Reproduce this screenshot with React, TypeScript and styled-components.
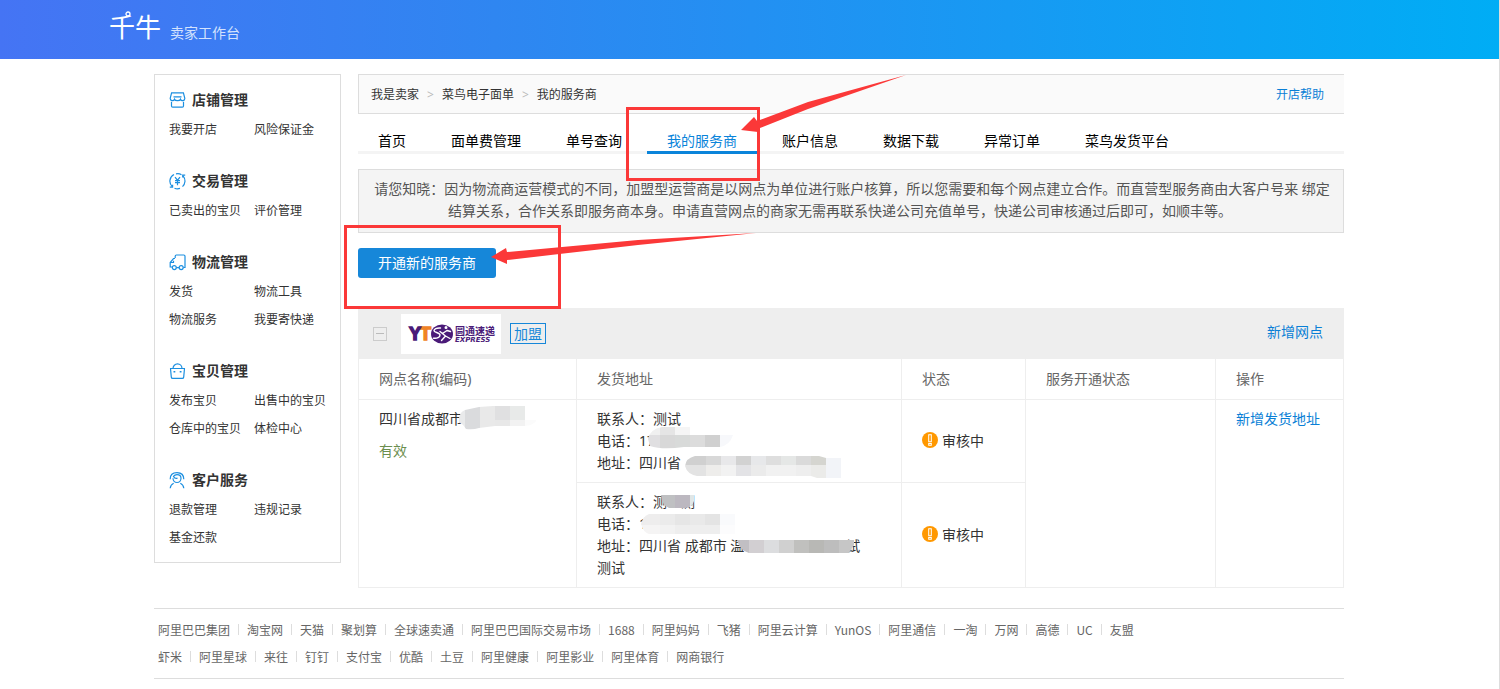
import React, { useId } from "react";
import styled, { createGlobalStyle } from "styled-components";

const BLUE = "#1687d9";
const RED = "#fb3838";

const GlobalStyle = createGlobalStyle`
  *, *::before, *::after { box-sizing: border-box; }
  body {
    margin: 0;
    background: #fff;
    color: #333;
    font-family: "Noto Sans", "Noto Sans CJK SC", sans-serif;
    font-size: 14px;
    line-height: 22px;
  }
  a { color: inherit; text-decoration: none; }
  ul, ol, p, h1, h2 { margin: 0; padding: 0; list-style: none; }
`;

const Page = styled.div`
  min-height: 100vh;
  border-right: 1px solid #ddd;
`;

/* ---------- header ---------- */

const Header = styled.header`
  display: flex;
  align-items: center;
  height: 59px;
  padding: 0 109px;
  background: linear-gradient(90deg, #4574f4, #2f86f1 33%, #00adf5);
  color: #fff;
`;

const Brand = styled.a`
  display: flex;
  align-items: center;
  gap: 9px;
`;

const BrandName = styled.span`
  position: relative;
  padding-bottom: 6px;
  font-size: 26px;
  line-height: 32px;
`;

const BrandRing = styled.svg`
  position: absolute;
  top: 0;
  left: 16px;
`;

const BrandSub = styled.span`
  padding-top: 6px;
  color: #d3e2fd;
`;

/* ---------- frame ---------- */

const Frame = styled.div`
  max-width: 1191px;
  margin: 0 auto;
  padding: 15px 1px 10px 0;
`;

const Columns = styled.div`
  display: flex;
  align-items: flex-start;
  gap: 17px;
`;

/* ---------- sidebar ---------- */

const Sidebar = styled.nav`
  flex: 0 0 187px;
  padding: 10px 0 10px 14px;
  border: 1px solid #ddd;
  font-size: 12px;
`;

const Group = styled.section`
  & + & { margin-top: 22px; }
`;

const GroupTitle = styled.h2`
  display: flex;
  align-items: center;
  gap: 6px;
  height: 30px;
  font-size: 14px;
  font-weight: 700;
  svg { flex: none; }
`;

const GroupLinks = styled.ul`
  display: grid;
  grid-template-columns: 85px 1fr;
  padding-top: 1px;
  line-height: 28px;
  white-space: nowrap;
`;

const StrokeIcon = styled.svg.attrs({ width: 17, height: 17, viewBox: "0 0 17 17", "aria-hidden": true })`
  fill: none;
  stroke: #1c8fe0;
  stroke-width: 1.2;
`;

const ShopIcon = () => (
  <StrokeIcon>
    <path d="M2.600 .8h11.800l1.400 5.600c0 2.600-3.600 3-4.300 .8-.8 2-5.200 2-6 0C4.800 9.400 1.200 9 1.200 6.400z" />
    <path d="M2.500 9.800V14c0 .8.4 1.200 1.200 1.200h9.600c.8 0 1.200-.4 1.200-1.200V9.800M4.500 4.800h8" />
  </StrokeIcon>
);
const YuanIcon = () => (
  <StrokeIcon>
    <path d="M5 1.500A7.500 7.500 0 0 0 3.200 13.600M.8 14.200h2.800V11.800M7 .9A7.500 7.500 0 0 1 12.500 1.700M13.500 13.600A7.500 7.500 0 0 0 14.200 3.200M16.200 2.200h-2.500v2.400M5.500 15.200A7.500 7.500 0 0 0 11 15.400" />
    <path d="M6 4.200l2.500 3 2.500-3M8.500 7.200v5M6 7.700h5M6 9.700h5" />
  </StrokeIcon>
);
const TruckIcon = () => (
  <StrokeIcon>
    <path d="M6.200 4V2.200c0-.8.400-1.200 1.200-1.200h7.400c.8 0 1.200.4 1.200 1.200v11.300h-1.600M6 4.500H4.500L1.200 8.500v4.500h1.800M1.500 8.500h3V6.700M7.500 13.600h2.500" />
    <circle cx="5.300" cy="13.600" r="2" />
    <circle cx="12.200" cy="13.600" r="2" />
  </StrokeIcon>
);
const BasketIcon = () => (
  <StrokeIcon>
    <path d="M1 5.500h15M1.500 5.500l.8 8.600c.1.900.5 1.300 1.400 1.300h9.600c.9 0 1.300-.4 1.400-1.300l.8-8.600M4 5.500C4 3 6 .9 8.500 .9S13 3 13 5.500" />
    <path d="M4.500 8.700h1.800M10.700 8.700h1.800" strokeWidth="1.600" />
  </StrokeIcon>
);
const ServiceIcon = () => (
  <StrokeIcon>
    <path d="M1.200 7.200C1.200 3 4 .7 8 .7s6.800 2.300 6.800 6.500M4 6.300c0 2.300 1.700 4.200 4 4.200s4-1.900 4-4.200S10.300 2.600 8 2.600C6.500 2.600 5.200 3.300 4.500 4.400c1 2 2.500 2.200 4 1.800M1.200 16.200c.2-2.500 1.200-4 3.500-5M14.800 16.200c-.2-2.500-1.200-4-3.500-5" />
  </StrokeIcon>
);

const groups = [
  { title: "店铺管理", Icon: ShopIcon, links: ["我要开店", "风险保证金"] },
  { title: "交易管理", Icon: YuanIcon, links: ["已卖出的宝贝", "评价管理"] },
  { title: "物流管理", Icon: TruckIcon, links: ["发货", "物流工具", "物流服务", "我要寄快递"] },
  { title: "宝贝管理", Icon: BasketIcon, links: ["发布宝贝", "出售中的宝贝", "仓库中的宝贝", "体检中心"] },
  { title: "客户服务", Icon: ServiceIcon, links: ["退款管理", "违规记录", "基金还款"] },
];

/* ---------- main column ---------- */

const Main = styled.main`
  position: relative;
  flex: 1;
  min-width: 0;
`;

const CrumbBar = styled.div`
  display: flex;
  align-items: center;
  justify-content: space-between;
  height: 40px;
  padding: 2px 20px 0 12px;
  border: 1px solid #ddd;
  border-right: 0;
  background: #fafafa;
  font-size: 12px;
`;

const Crumbs = styled.ol`
  display: flex;
  li + li::before {
    content: ">";
    margin: 0 8px;
    color: #bbb;
  }
`;

const BlueLink = styled.a`
  color: #0a7fd6;
`;

const Tabs = styled.nav`
  display: flex;
  gap: 5px;
  box-shadow: inset 0 -3px #f4f4f4;
`;

const Tab = styled.a<{ $active?: boolean }>`
  padding: 16px 20px 0;
  border-bottom: 3px solid ${(p) => (p.$active ? "#0a84da" : "transparent")};
  color: ${(p) => (p.$active ? "#0a84da" : "#000")};
  line-height: 21px;
`;

const Notice = styled.div`
  margin-top: 15px;
  padding: 8px 10px 10px 12px;
  border: 1px solid #ddd;
  background: #f4f4f4;
  color: #555;
  text-align: center;
`;

const NoticeTail = styled.p`
  padding-right: 24px;
`;

const PrimaryButton = styled.button`
  display: block;
  height: 30px;
  margin: 15px 0 30px;
  padding: 0 20px;
  border: 0;
  border-radius: 3px;
  background: ${BLUE};
  color: #fff;
  font: inherit;
`;

const CarrierBar = styled.div`
  display: flex;
  align-items: center;
  height: 51px;
  padding: 0 21px 0 15px;
  background: #eee;
  > a { padding-bottom: 4px; }
`;

const Collapse = styled.button`
  display: flex;
  align-items: center;
  justify-content: center;
  width: 14px;
  height: 14px;
  margin-right: 14px;
  padding: 0;
  border: 1px solid #ccc;
  background: transparent;
  &::before {
    content: "";
    width: 8px;
    height: 1px;
    background: #bbb;
  }
`;

const LogoBox = styled.svg`
  flex: none;
  background: #fff;
`;

const TypeTag = styled.span`
  margin: 0 auto 0 9px;
  padding: 0 3px;
  border: 1px solid ${BLUE};
  color: ${BLUE};
  line-height: 19px;
`;

const CarrierLogo = () => (
  <LogoBox width="100" height="40" viewBox="0 0 100 40" role="img" aria-label="圆通速递">
    <g fontFamily="Liberation Sans, sans-serif" fontWeight="700" fontSize="18" strokeWidth="1.500">
      <text x="19" y="26" fill="#f08327" stroke="#f08327">T</text>
      <text x="8" y="26" fill="#4a1a78" stroke="#4a1a78">Y</text>
    </g>
    <ellipse cx="41" cy="20" rx="11" ry="9.500" fill="#4a1a78" />
    <g fill="none" stroke="#fff" strokeWidth="1.400" strokeLinecap="round">
      <path d="M39.500 14c-4-.3-6.500 .8-6.500 2.700s6 1.800 6 4.300-3 3.700-6.500 3.200" />
      <path d="M46 16.500l-4.500 3 3 2.500-4 4.500M41.500 19.500l-2.500-2M44.500 22l4.500 2.500M46 16.500l3.500 1" />
      <circle cx="45" cy="13.500" r=".8" />
    </g>
    <text x="54" y="21" fill="#4a1a78" fontSize="10" fontWeight="700" fontFamily="Noto Sans CJK SC, sans-serif">圆通速递</text>
    <text x="54" y="28" fill="#4a1a78" fontSize="7" fontWeight="700" fontStyle="italic" fontFamily="DejaVu Sans, sans-serif">EXPRESS</text>
  </LogoBox>
);

/* ---------- table ---------- */

const Table = styled.table`
  width: 100%;
  table-layout: fixed;
  border-collapse: separate;
  border-spacing: 0;
  border-left: 1px solid #eee;
  text-align: left;
`;

const Th = styled.th<{ $share: number }>`
  width: ${(p) => p.$share}px;
  height: 41px;
  padding: 0 20px;
  border: solid #eee;
  border-width: 0 1px 1px 0;
  color: #666;
  font-weight: 400;
`;

const Td = styled.td<{ $middle?: boolean }>`
  padding: 8px 20px;
  border: solid #eee;
  border-width: 0 1px 1px 0;
  vertical-align: ${(p) => (p.$middle ? "middle" : "top")};
`;

const Line = styled.div`
  display: flex;
  height: 22px;
  white-space: pre;
`;

const Valid = styled.p`
  margin-top: 10px;
  color: #6b8e4e;
`;

const Status = styled.span`
  display: flex;
  align-items: center;
  gap: 4px;
  svg { margin-bottom: 2px; }
`;

const MosaicSvg = styled.svg<{ $before: number; $after: number }>`
  position: relative;
  flex: none;
  overflow: visible;
  margin-left: -${(p) => p.$before}px;
  margin-right: -${(p) => p.$after}px;
`;

type Band = { y: number; h: number; stops: [number, number, string][] };

/* Pixelated patch that hides private data; before/after = overlap with the neighbouring text. */
const Mosaic = ({ width, before = 0, after = 0, outline, bands }: {
  width: number; before?: number; after?: number; outline: string; bands: Band[];
}) => {
  const id = useId();
  return (
    <MosaicSvg width={width} height="22" $before={before} $after={after} shapeRendering="crispEdges" aria-hidden="true">
      <clipPath id={id}><path d={outline} /></clipPath>
      <g clipPath={`url(#${id})`}>
        {bands.map((b) => b.stops.map(([x, w, c]) => (
          <rect key={`${b.y}-${x}`} x={x} y={b.y} width={w} height={b.h} fill={c} />
        )))}
      </g>
    </MosaicSvg>
  );
};

const WarnIcon = () => (
  <svg width="16" height="16" viewBox="0 0 16 16" aria-hidden="true">
    <circle cx="8" cy="8" r="8" fill="#ff9800" />
    <path d="M6.200 2.200h3.600v8H6.200zM6.200 11h3.600v2.800H6.200z" fill="#fff" />
    <path d="M7.200 3.200h1.600v6H7.200zM7.200 12h1.600v.8H7.200z" fill="#ff9800" />
  </svg>
);

const Pending = () => <Status><WarnIcon />审核中</Status>;

/* ---------- annotations ---------- */

const Annotations = styled.svg`
  position: absolute;
  top: 0;
  left: 0;
  overflow: visible;
  pointer-events: none;
  fill: ${RED};
  fill-rule: evenodd;
`;

/* ---------- footer ---------- */

const Footer = styled.footer`
  margin-top: 20px;
  padding: 7px 4px 8px;
  border: solid #ddd;
  border-width: 1px 0;
  color: #666;
  font-family: "Noto Sans CJK SC", sans-serif;
  font-size: 12px;
  line-height: 27px;
`;

const FooterRow = styled.ul`
  display: flex;
  flex-wrap: wrap;
  li { display: flex; align-items: center; }
  li + li::before {
    content: "";
    width: 1px;
    height: 11px;
    margin: 0 8px;
    background: #ddd;
  }
`;

const footerRows = [
  ["阿里巴巴集团", "淘宝网", "天猫", "聚划算", "全球速卖通", "阿里巴巴国际交易市场", "1688", "阿里妈妈", "飞猪", "阿里云计算", "YunOS", "阿里通信", "一淘", "万网", "高德", "UC", "友盟"],
  ["虾米", "阿里星球", "来往", "钉钉", "支付宝", "优酷", "土豆", "阿里健康", "阿里影业", "阿里体育", "网商银行"],
];

const tabs = ["首页", "面单费管理", "单号查询", "我的服务商", "账户信息", "数据下载", "异常订单", "菜鸟发货平台"];

export default function App() {
  return (
    <Page>
      <GlobalStyle />
      <Header>
        <Brand href="#">
          <BrandName>
            千牛
            <BrandRing width="6" height="6" viewBox="0 0 6 6" aria-hidden="true">
              <circle cx="3" cy="3" r="2" fill="none" stroke="#fff" strokeWidth="1.300" />
            </BrandRing>
          </BrandName>
          <BrandSub>卖家工作台</BrandSub>
        </Brand>
      </Header>
      <Frame>
        <Columns>
          <Sidebar>
            {groups.map(({ title, Icon, links }) => (
              <Group key={title}>
                <GroupTitle><Icon />{title}</GroupTitle>
                <GroupLinks>
                  {links.map((l) => <li key={l}><a href="#">{l}</a></li>)}
                </GroupLinks>
              </Group>
            ))}
          </Sidebar>
          <Main>
            <CrumbBar>
              <Crumbs>
                <li><a href="#">我是卖家</a></li>
                <li><a href="#">菜鸟电子面单</a></li>
                <li><a href="#">我的服务商</a></li>
              </Crumbs>
              <BlueLink href="#">开店帮助</BlueLink>
            </CrumbBar>
            <Tabs>
              {tabs.map((t) => <Tab key={t} href="#" $active={t === "我的服务商"}>{t}</Tab>)}
            </Tabs>
            <Notice>
              <p>请您知晓：因为物流商运营模式的不同，加盟型运营商是以网点为单位进行账户核算，所以您需要和每个网点建立合作。而直营型服务商由大客户号来 绑定</p>
              <NoticeTail>结算关系，合作关系即服务商本身。申请直营网点的商家无需再联系快递公司充值单号，快递公司审核通过后即可，如顺丰等。</NoticeTail>
            </Notice>
            <PrimaryButton type="button">开通新的服务商</PrimaryButton>
            <CarrierBar>
              <Collapse type="button" aria-label="收起" />
              <CarrierLogo />
              <TypeTag>加盟</TypeTag>
              <BlueLink href="#">新增网点</BlueLink>
            </CarrierBar>
            <Table>
              <thead>
                <tr>
                  <Th $share={218}>网点名称(编码)</Th>
                  <Th $share={325}>发货地址</Th>
                  <Th $share={124}>状态</Th>
                  <Th $share={190}>服务开通状态</Th>
                  <Th $share={128}>操作</Th>
                </tr>
              </thead>
              <tbody>
                <tr>
                  <Td rowSpan={2}>
                    <Line>
                      四川省成都市
                      <Mosaic width={78} before={4} outline="M0 10Q1 4 6 2L20 -1L34 -2H66V11H78Q76 17 66 18H36L20 20Q14 22 7 21Q4 16 0 14Z"
                        bands={[
                          { y: -2, h: 24, stops: [[0, 6, "#e9eaeb"], [6, 15, "#dadbdd"], [21, 15, "#e9e9e9"]] },
                          { y: -2, h: 14, stops: [[36, 15, "#e0e0e1"], [51, 15, "#e8eae9"]] },
                          { y: 12, h: 8, stops: [[36, 15, "#e8e8e8"], [51, 15, "#f2f2f2"], [66, 12, "#fbfbfb"]] },
                        ]} />
                    </Line>
                    <Valid>有效</Valid>
                  </Td>
                  <Td>
                    <Line>联系人：测试</Line>
                    <Line>
                      电话：17
                      <Mosaic width={85} before={7} outline="M0 9Q2 -1 14 -3H42V5H85Q82 15 72 17H36Q14 20 2 16Z"
                        bands={[
                          { y: -3, h: 8, stops: [[0, 12, "#f0f0f0"], [12, 15, "#e5e5e5"], [27, 15, "#f5f5f5"]] },
                          { y: 5, h: 14, stops: [[0, 12, "#e0dfe1"], [12, 15, "#d8d8d8"], [27, 15, "#d8dad9"], [42, 15, "#dcdcdc"], [57, 15, "#d0d0d0"], [72, 13, "#f7f8fb"]] },
                        ]} />
                    </Line>
                    <Line>
                      {"地址：四川省 "}
                      <Mosaic width={156} outline="M0 14Q1 6 10 4H134L141 6H156V26H132L126 24H12Q2 22 0 14Z"
                        bands={[
                          { y: 4, h: 9, stops: [[0, 21, "#d0d0d0"], [21, 15, "#d8d8d8"], [36, 15, "#e8e8ea"], [51, 15, "#d2d2d2"], [66, 15, "#e7e8ea"], [81, 15, "#dedede"], [96, 15, "#e5e7e6"], [111, 15, "#dadada"], [126, 15, "#d5d5d0"], [141, 15, "#f2f4f8"]] },
                          { y: 13, h: 13, stops: [[0, 21, "#e3e3e3"], [21, 15, "#eeedeb"], [36, 15, "#f2f2f2"], [51, 15, "#e3e3e6"], [66, 15, "#ebebeb"], [81, 30, "#f1f1f1"], [111, 15, "#eeeeee"], [126, 15, "#ebebe9"], [141, 15, "#f2f4f8"]] },
                        ]} />
                    </Line>
                  </Td>
                  <Td $middle><Pending /></Td>
                  <Td rowSpan={2} />
                  <Td rowSpan={2}><BlueLink href="#">新增发货地址</BlueLink></Td>
                </tr>
                <tr>
                  <Td>
                    <Line>
                      联系人：测
                      <Mosaic width={33} before={6} after={13} outline="M0 4H33V10Q31 17 24 17H8Q1 15 0 4Z"
                        bands={[{ y: 4, h: 13, stops: [[0, 14, "#bfc0c2"], [14, 15, "#bcb8c0"], [29, 4, "#e0e6e6"]] }]} />
                      测
                    </Line>
                    <Line>
                      电话：1
                      <Mosaic width={94} before={6} outline="M0 11Q2 3 8 1H94V21H8Q2 19 0 11Z"
                        bands={[
                          { y: 1, h: 11, stops: [[0, 19, "#eeeded"], [19, 15, "#ebebeb"], [34, 15, "#e6e6e6"], [49, 15, "#e9e9e9"], [64, 15, "#e4e4e4"], [79, 15, "#f9fafc"]] },
                          { y: 12, h: 9, stops: [[0, 19, "#f5f4f4"], [19, 15, "#f2f2f2"], [34, 45, "#eeeeee"], [79, 15, "#fcfcfd"]] },
                        ]} />
                    </Line>
                    <Line>
                      {"地址：四川省 成都市 温"}
                      <Mosaic width={117} before={7} after={8} outline="M0 5H117V10L112 18H12Q3 16 0 5Z"
                        bands={[{ y: 5, h: 13, stops: [[0, 12, "#c1bfc3"], [12, 15, "#d2cfd2"], [27, 15, "#dcdddf"], [42, 15, "#d0d0d0"], [57, 15, "#c0c0be"], [72, 15, "#b8b8b5"], [87, 15, "#bdbdbd"], [102, 15, "#c6c6c6"]] }]} />
                      试
                    </Line>
                    <Line>测试</Line>
                  </Td>
                  <Td $middle><Pending /></Td>
                </tr>
              </tbody>
            </Table>
            <Annotations width="986" height="240" aria-hidden="true">
              <path d="M268 33H402V107H268ZM271 36V104H399V36Z" />
              <path d="M-14 151H203V235H-14ZM-11 154V232H200V154Z" />
              <path d="M383 56L396 43L399 47L450 28L548 1L450 35L402 54L400 58Z" />
              <path d="M133 183L148 174L149 178L280 166L398 159L280 171L149 186V190Z" />
            </Annotations>
          </Main>
        </Columns>
        <Footer>
          {footerRows.map((row) => (
            <FooterRow key={row[0]}>
              {row.map((l) => <li key={l}><a href="#">{l}</a></li>)}
            </FooterRow>
          ))}
        </Footer>
      </Frame>
    </Page>
  );
}
